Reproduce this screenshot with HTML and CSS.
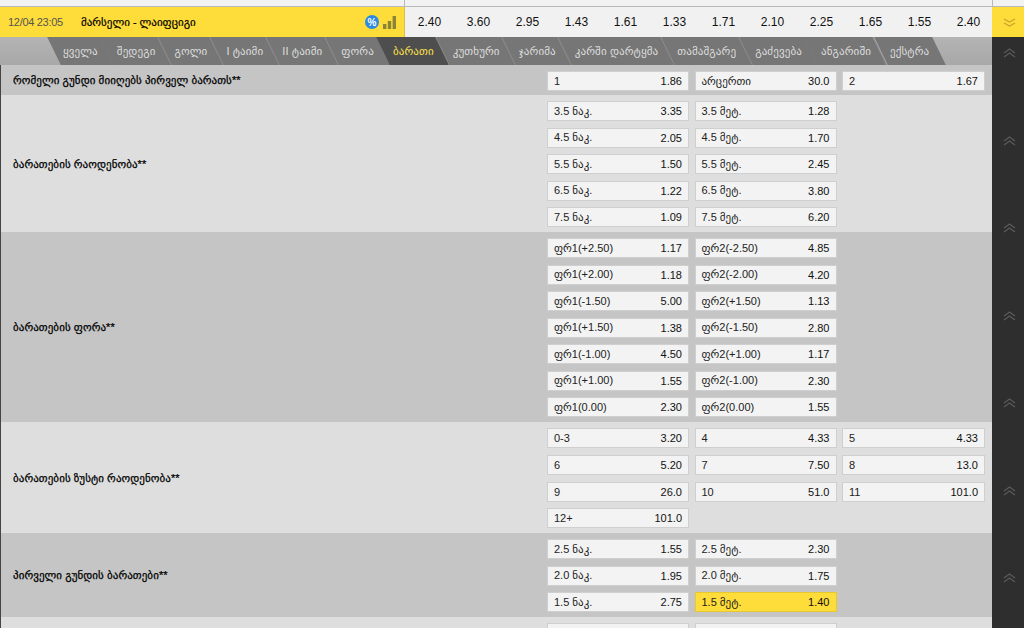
FILE: index.html
```html
<!DOCTYPE html>
<html lang="ka">
<head>
<meta charset="utf-8">
<title>მარსელი - ლაიფციგი</title>
<link rel="stylesheet" href="styles.css">
</head>
<body>
<div class="page">
  <main class="main">
    <div class="topstrip"><div class="topstrip-left"></div></div>
    <header class="match">
      <div class="match-info">
        <span class="match-time">12/04 23:05</span>
        <span class="match-name">მარსელი - ლაიფციგი</span>
        <span class="match-pct">%</span>
        <svg class="match-stats" width="13" height="13" viewBox="0 0 13 13"><path class="stat" d="M0 8h3.4v5H0zM4.8 5h3.4v8H4.8zM9.6 0H13v13H9.6z"/></svg>
      </div>
      <div class="match-odds">
        <span>2.40</span><span>3.60</span><span>2.95</span><span>1.43</span><span>1.61</span><span>1.33</span><span>1.71</span><span>2.10</span><span>2.25</span><span>1.65</span><span>1.55</span><span>2.40</span>
      </div>
    </header>
    <nav class="tabs">
      <a class="tab">ყველა</a><a class="tab">შედეგი</a><a class="tab">გოლი</a><a class="tab">I ტაიმი</a><a class="tab">II ტაიმი</a><a class="tab">ფორა</a><a class="tab active">ბარათი</a><a class="tab">კუთხური</a><a class="tab">ჯარიმა</a><a class="tab">კარში დარტყმა</a><a class="tab">თამაშგარე</a><a class="tab">გაძევება</a><a class="tab">ანგარიში</a><a class="tab">ექსტრა</a>
    </nav>

    <section class="group dark h30">
      <h2 class="title top">რომელი გუნდი მიიღებს პირველ ბარათს**</h2>
      <div class="grid">
        <a class="bet"><span>1</span><b>1.86</b></a><a class="bet"><span>არცერთი</span><b>30.0</b></a><a class="bet"><span>2</span><b>1.67</b></a>
      </div>
    </section>

    <section class="group light">
      <h2 class="title">ბარათების რაოდენობა**</h2>
      <div class="grid">
        <a class="bet"><span>3.5 ნაკ.</span><b>3.35</b></a><a class="bet"><span>3.5 მეტ.</span><b>1.28</b></a><i></i>
        <a class="bet"><span>4.5 ნაკ.</span><b>2.05</b></a><a class="bet"><span>4.5 მეტ.</span><b>1.70</b></a><i></i>
        <a class="bet"><span>5.5 ნაკ.</span><b>1.50</b></a><a class="bet"><span>5.5 მეტ.</span><b>2.45</b></a><i></i>
        <a class="bet"><span>6.5 ნაკ.</span><b>1.22</b></a><a class="bet"><span>6.5 მეტ.</span><b>3.80</b></a><i></i>
        <a class="bet"><span>7.5 ნაკ.</span><b>1.09</b></a><a class="bet"><span>7.5 მეტ.</span><b>6.20</b></a><i></i>
      </div>
    </section>

    <section class="group dark">
      <h2 class="title">ბარათების ფორა**</h2>
      <div class="grid">
        <a class="bet"><span>ფრ1(+2.50)</span><b>1.17</b></a><a class="bet"><span>ფრ2(-2.50)</span><b>4.85</b></a><i></i>
        <a class="bet"><span>ფრ1(+2.00)</span><b>1.18</b></a><a class="bet"><span>ფრ2(-2.00)</span><b>4.20</b></a><i></i>
        <a class="bet"><span>ფრ1(-1.50)</span><b>5.00</b></a><a class="bet"><span>ფრ2(+1.50)</span><b>1.13</b></a><i></i>
        <a class="bet"><span>ფრ1(+1.50)</span><b>1.38</b></a><a class="bet"><span>ფრ2(-1.50)</span><b>2.80</b></a><i></i>
        <a class="bet"><span>ფრ1(-1.00)</span><b>4.50</b></a><a class="bet"><span>ფრ2(+1.00)</span><b>1.17</b></a><i></i>
        <a class="bet"><span>ფრ1(+1.00)</span><b>1.55</b></a><a class="bet"><span>ფრ2(-1.00)</span><b>2.30</b></a><i></i>
        <a class="bet"><span>ფრ1(0.00)</span><b>2.30</b></a><a class="bet"><span>ფრ2(0.00)</span><b>1.55</b></a><i></i>
      </div>
    </section>

    <section class="group light">
      <h2 class="title">ბარათების ზუსტი რაოდენობა**</h2>
      <div class="grid">
        <a class="bet"><span>0-3</span><b>3.20</b></a><a class="bet"><span>4</span><b>4.33</b></a><a class="bet"><span>5</span><b>4.33</b></a>
        <a class="bet"><span>6</span><b>5.20</b></a><a class="bet"><span>7</span><b>7.50</b></a><a class="bet"><span>8</span><b>13.0</b></a>
        <a class="bet"><span>9</span><b>26.0</b></a><a class="bet"><span>10</span><b>51.0</b></a><a class="bet"><span>11</span><b>101.0</b></a>
        <a class="bet"><span>12+</span><b>101.0</b></a>
      </div>
    </section>

    <section class="group dark">
      <h2 class="title">პირველი გუნდის ბარათები**</h2>
      <div class="grid">
        <a class="bet"><span>2.5 ნაკ.</span><b>1.55</b></a><a class="bet"><span>2.5 მეტ.</span><b>2.30</b></a><i></i>
        <a class="bet"><span>2.0 ნაკ.</span><b>1.95</b></a><a class="bet"><span>2.0 მეტ.</span><b>1.75</b></a><i></i>
        <a class="bet"><span>1.5 ნაკ.</span><b>2.75</b></a><a class="bet picked"><span>1.5 მეტ.</span><b>1.40</b></a><i></i>
      </div>
    </section>

    <section class="group light">
      <div class="title"></div>
      <div class="grid">
        <a class="bet"></a><a class="bet"></a><i></i>
      </div>
    </section>
  </main>

  <aside class="rail">
    <div class="rail-top"></div>
    <div class="rail-toggle">
      <svg class="chev-y" width="13" height="9" viewBox="0 0 13 9"><path d="M1 1l5.500 3 5.500-3M1 5l5.500 3 5.500-3"/></svg>
    </div>
    <div class="rail-list">
      <svg class="chev" width="13" height="10" viewBox="0 0 13 10"><path d="M1 5l5.500-4 5.500 4M1 9l5.500-4 5.500 4"/></svg>
      <svg class="chev" width="13" height="10" viewBox="0 0 13 10"><path d="M1 5l5.500-4 5.500 4M1 9l5.500-4 5.500 4"/></svg>
      <svg class="chev" width="13" height="10" viewBox="0 0 13 10"><path d="M1 5l5.500-4 5.500 4M1 9l5.500-4 5.500 4"/></svg>
      <svg class="chev" width="13" height="10" viewBox="0 0 13 10"><path d="M1 5l5.500-4 5.500 4M1 9l5.500-4 5.500 4"/></svg>
      <svg class="chev" width="13" height="10" viewBox="0 0 13 10"><path d="M1 5l5.500-4 5.500 4M1 9l5.500-4 5.500 4"/></svg>
      <svg class="chev" width="13" height="10" viewBox="0 0 13 10"><path d="M1 5l5.500-4 5.500 4M1 9l5.500-4 5.500 4"/></svg>
      <svg class="chev" width="13" height="10" viewBox="0 0 13 10"><path d="M1 5l5.500-4 5.500 4M1 9l5.500-4 5.500 4"/></svg>
    </div>
  </aside>
</div>
</body>
</html>
```
FILE: styles.css
```css
* { box-sizing: border-box; }
html, body { margin: 0; height: 100%; overflow: hidden; }
body { font-family: "Liberation Sans", "DejaVu Sans", sans-serif; font-size: 11px; color: #222; background: #ddd; }
.page { display: flex; height: 628px; overflow: hidden; }
.main { width: 992px; flex: none; display: flex; flex-direction: column; overflow: hidden; }

.topstrip { height: 7px; display: flex; background: #f2f2f2; border-bottom: 1px solid #b9b9b9; flex: none; }
.topstrip-left { width: 405px; border-right: 1px solid #b9b9b9; }

.match { height: 30px; flex: none; display: flex; background: #f1f1f1; }
.match-info { width: 405px; flex: none; display: flex; align-items: center; background: #fedc3a; padding-left: 8px; border-right: 1px solid #d8c24a; }
.match-time { font-size: 11px; letter-spacing: -0.3px; color: #555; width: 73px; }
.match-name { font-size: 11px; color: #000; flex: 1; -webkit-text-stroke: 0.2px #000; }
.match-pct { width: 14px; height: 14px; border-radius: 50%; background: #2b8be0; color: #fff; font-size: 10px; font-weight: bold; display: flex; align-items: center; justify-content: center; margin-right: 4px; }
.match-stats { margin-right: 8px; }
.stat { fill: #8a8434; }
.match-odds { flex: none; width: 588px; display: flex; align-items: center; font-size: 12px; color: #111; }
.match-odds span { width: 49px; text-align: center; }

.tabs { height: 28px; flex: none; display: flex; padding-left: 53.5px; background: linear-gradient(#b4b4b4, #a8a8a8); overflow: hidden; }
.tab { position: relative; z-index: 0; display: flex; align-items: center; padding: 0 9.5px; color: #dedede; font-size: 11px; letter-spacing: 0.12px; height: 28px; }
.tab::before { content: ""; position: absolute; z-index: -1; inset: 0; background: #767676; transform: skewX(26deg); border-right: 1px solid #8e8e8e; }
.tab:last-child::before { border-right: 0; }
.tab.active { color: #fde24a; }
.tab.active::before { background: #4e4e4e; }

.group { flex: none; display: flex; padding: 6px 7px 5px 0; border-left: 1px solid #444; }
.dark { background: #c5c5c5; }
.light { background: #dedede; }
.h30 { height: 30px; }
.title { width: 546px; flex: none; margin: 0; padding-left: 12px; font-size: 11px; font-weight: normal; letter-spacing: 0.06px; color: #000; align-self: center; -webkit-text-stroke: 0.25px #000; }
.title.top { align-self: flex-start; line-height: 19px; }
.grid { flex: 1; display: grid; grid-template-columns: 142px 142px 143px; column-gap: 5.5px; row-gap: 6.55px; align-content: start; }
.bet { height: 20px; display: flex; justify-content: space-between; align-items: center; padding: 0 6px; background: #f3f3f3; border: 1px solid #cfcfcf; color: #222; }
.bet b { font-weight: normal; color: #111; }
.bet.picked { background: #fedc3a; border-color: #e6c832; }
.grid i { display: block; }

.rail { width: 32px; flex: none; background: #2e2e2e; display: flex; flex-direction: column; }
.rail-top { height: 7px; background: #f2f2f2; border-left: 1px solid #b9b9b9; border-bottom: 1px solid #b9b9b9; flex: none; }
.rail-toggle { height: 30px; background: #fedc3a; display: flex; align-items: center; justify-content: center; padding-left: 2px; flex: none; }
.chev-y { fill: none; stroke: #c9a52a; stroke-width: 1.3; }
.rail-list { flex: 1; display: flex; flex-direction: column; align-items: center; gap: 77.5px; padding: 11px 0 0 2px; }
.chev { flex: none; fill: none; stroke: #5a5a5a; stroke-width: 1.3; }
```
